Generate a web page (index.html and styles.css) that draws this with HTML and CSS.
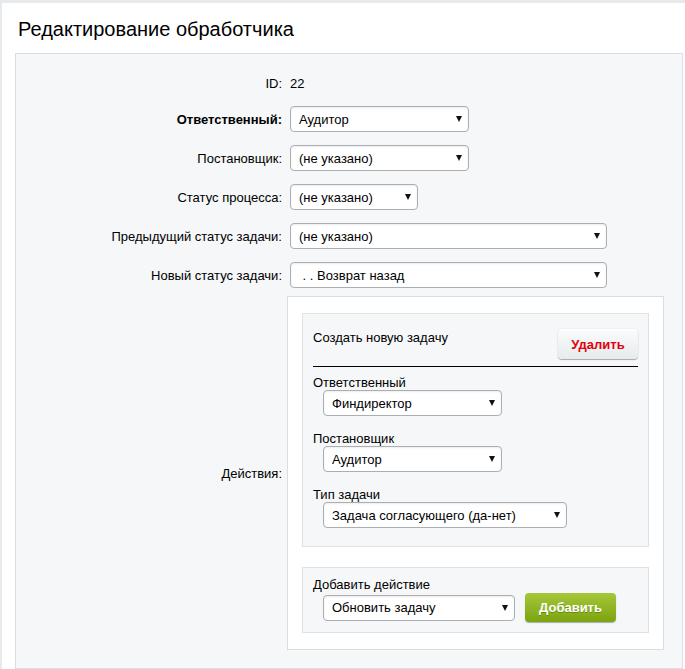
FILE: index.html
```html
<!DOCTYPE html>
<html lang="ru">
<head>
    <meta charset="UTF-8">
    <meta name="viewport" content="width=device-width, initial-scale=1.0">
    <title>Редактирование обработчика</title>
    <link rel="stylesheet" href="styles.css">
</head>
<body>
    <div class="page">
        <h1 class="title">Редактирование обработчика</h1>
        <div class="panel">
            <!-- основные поля -->
            <div class="row row-id">
                <div class="lbl">ID:</div>
                <div class="val">22</div>
            </div>
            <div class="row">
                <div class="lbl"><b>Ответственный:</b></div>
                <div class="val"><span class="sel w178"><select><option>Аудитор</option></select></span></div>
            </div>
            <div class="row">
                <div class="lbl">Постановщик:</div>
                <div class="val"><span class="sel w178"><select><option>(не указано)</option></select></span></div>
            </div>
            <div class="row">
                <div class="lbl">Статус процесса:</div>
                <div class="val"><span class="sel w127"><select><option>(не указано)</option></select></span></div>
            </div>
            <div class="row">
                <div class="lbl">Предыдущий статус задачи:</div>
                <div class="val"><span class="sel w317"><select><option>(не указано)</option></select></span></div>
            </div>
            <div class="row">
                <div class="lbl">Новый статус задачи:</div>
                <div class="val"><span class="sel w317"><select><option>&nbsp;. . Возврат назад</option></select></span></div>
            </div>
            <!-- действия -->
            <div class="row row-actions">
                <div class="lbl">Действия:</div>
                <div class="val">
                    <div class="actions">
                        <div class="action-box">
                            <div class="action-head">
                                <span class="action-name">Создать новую задачу</span>
                                <button class="btn btn-del">Удалить</button>
                            </div>
                            <div class="field">
                                <div class="field-lbl">Ответственный</div>
                                <span class="sel w179"><select><option>Финдиректор</option></select></span>
                            </div>
                            <div class="field">
                                <div class="field-lbl">Постановщик</div>
                                <span class="sel w179"><select><option>Аудитор</option></select></span>
                            </div>
                            <div class="field">
                                <div class="field-lbl">Тип задачи</div>
                                <span class="sel w244"><select><option>Задача согласующего (да-нет)</option></select></span>
                            </div>
                        </div>
                        <div class="add-box">
                            <div class="field-lbl">Добавить действие</div>
                            <div class="add-row">
                                <span class="sel w192"><select><option>Обновить задачу</option></select></span>
                                <button class="btn btn-add">Добавить</button>
                            </div>
                        </div>
                    </div>
                </div>
            </div>
        </div>
    </div>
</body>
</html>
```

FILE: styles.css
```css
html, body{
    margin: 0;
    height: 100%;
}
body{
    background: #e6eaec;
    font: 13px "Liberation Sans", Arial, sans-serif;
    color: #000;
    overflow: hidden;
}
.page{
    margin: 3px 0 0 2px;
    padding: 14px 2px 0 13px;
    background: #fff;
    min-height: 100%;
    box-sizing: border-box;
}
.title{
    margin: 0 0 12px;
    padding-left: 3px;
    font-size: 20px;
    line-height: 24px;
    font-weight: normal;
    color: #000;
}
.panel{
    background: #f5f7f8;
    border: 1px solid #d9dfe1;
    padding: 20px 0 18px;
}
.row{
    display: flex;
    align-items: center;
    margin-bottom: 13px;
}
.row-id{
    line-height: 20px;
    margin-bottom: 12px;
}
.row-actions{
    margin-top: -5px;
    margin-bottom: 0;
}
.lbl{
    width: 266px;
    margin-right: 8px;
    text-align: right;
    flex: none;
}
/* селекты */
.sel{
    position: relative;
    display: inline-block;
    vertical-align: top;
}
.sel select{
    appearance: none;
    -webkit-appearance: none;
    display: block;
    width: 100%;
    height: 26px;
    margin: 0;
    padding: 0 20px 0 8px;
    border: 1px solid #a9afb2;
    border-radius: 4px;
    background: #fff;
    box-shadow: inset 0 1px 2px rgba(0,0,0,.08);
    font: 13px "Liberation Sans", Arial, sans-serif;
    color: #000;
}
.sel::after{
    content: "";
    position: absolute;
    right: 7px;
    top: 10px;
    border-left: 3px solid transparent;
    border-right: 3px solid transparent;
    border-top: 6px solid #111;
    pointer-events: none;
}
.w127{width: 128px;}
.w178{width: 179px;}
.w179{width: 179px;}
.w192{width: 192px;}
.w244{width: 244px;}
.w317{width: 317px;}
/* блок действий */
.actions{
    margin-left: -3px;
    width: 377px;
    box-sizing: border-box;
    background: #fff;
    border: 1px solid #d9dfe1;
    padding: 16px 14px 16px;
}
.action-box, .add-box{
    background: #f5f7f8;
    border: 1px solid #dde2e4;
    padding: 15px 10px 18px;
}
.action-head{
    display: flex;
    justify-content: space-between;
    align-items: flex-start;
    padding-bottom: 7px;
    border-bottom: 1px solid #000;
    margin-bottom: 8px;
}
.action-name{
    line-height: 15px;
    margin-top: 1px;
}
.field{
    margin-top: 15px;
}
.action-head + .field{
    margin-top: 0;
}
.field-lbl{
    line-height: 15px;
}
.field .sel, .add-row .sel{
    margin-left: 10px;
}
.add-box{
    margin-top: 20px;
    padding: 9px 10px 10px;
}
.add-row{
    display: flex;
    align-items: center;
    margin-top: 1px;
}
/* кнопки */
.btn{
    font: bold 13px "Liberation Sans", Arial, sans-serif;
    border-radius: 4px;
    cursor: pointer;
}
.btn-del{
    width: 80px;
    height: 30px;
    color: #e3000e;
    border: none;
    background: linear-gradient(#fbfcfc, #e6ebec);
    box-shadow: 0 0 1px rgba(0,0,0,.25), 0 1px 1px rgba(0,0,0,.3), inset 0 1px #fff;
}
.btn-add{
    width: 91px;
    height: 29px;
    margin-left: 10px;
    color: #fff;
    border: none;
    background: linear-gradient(#a6c73a, #7ba40e);
    box-shadow: 0 1px 1px rgba(0,0,0,.3);
    text-shadow: 0 1px rgba(0,0,0,.25);
}
```
